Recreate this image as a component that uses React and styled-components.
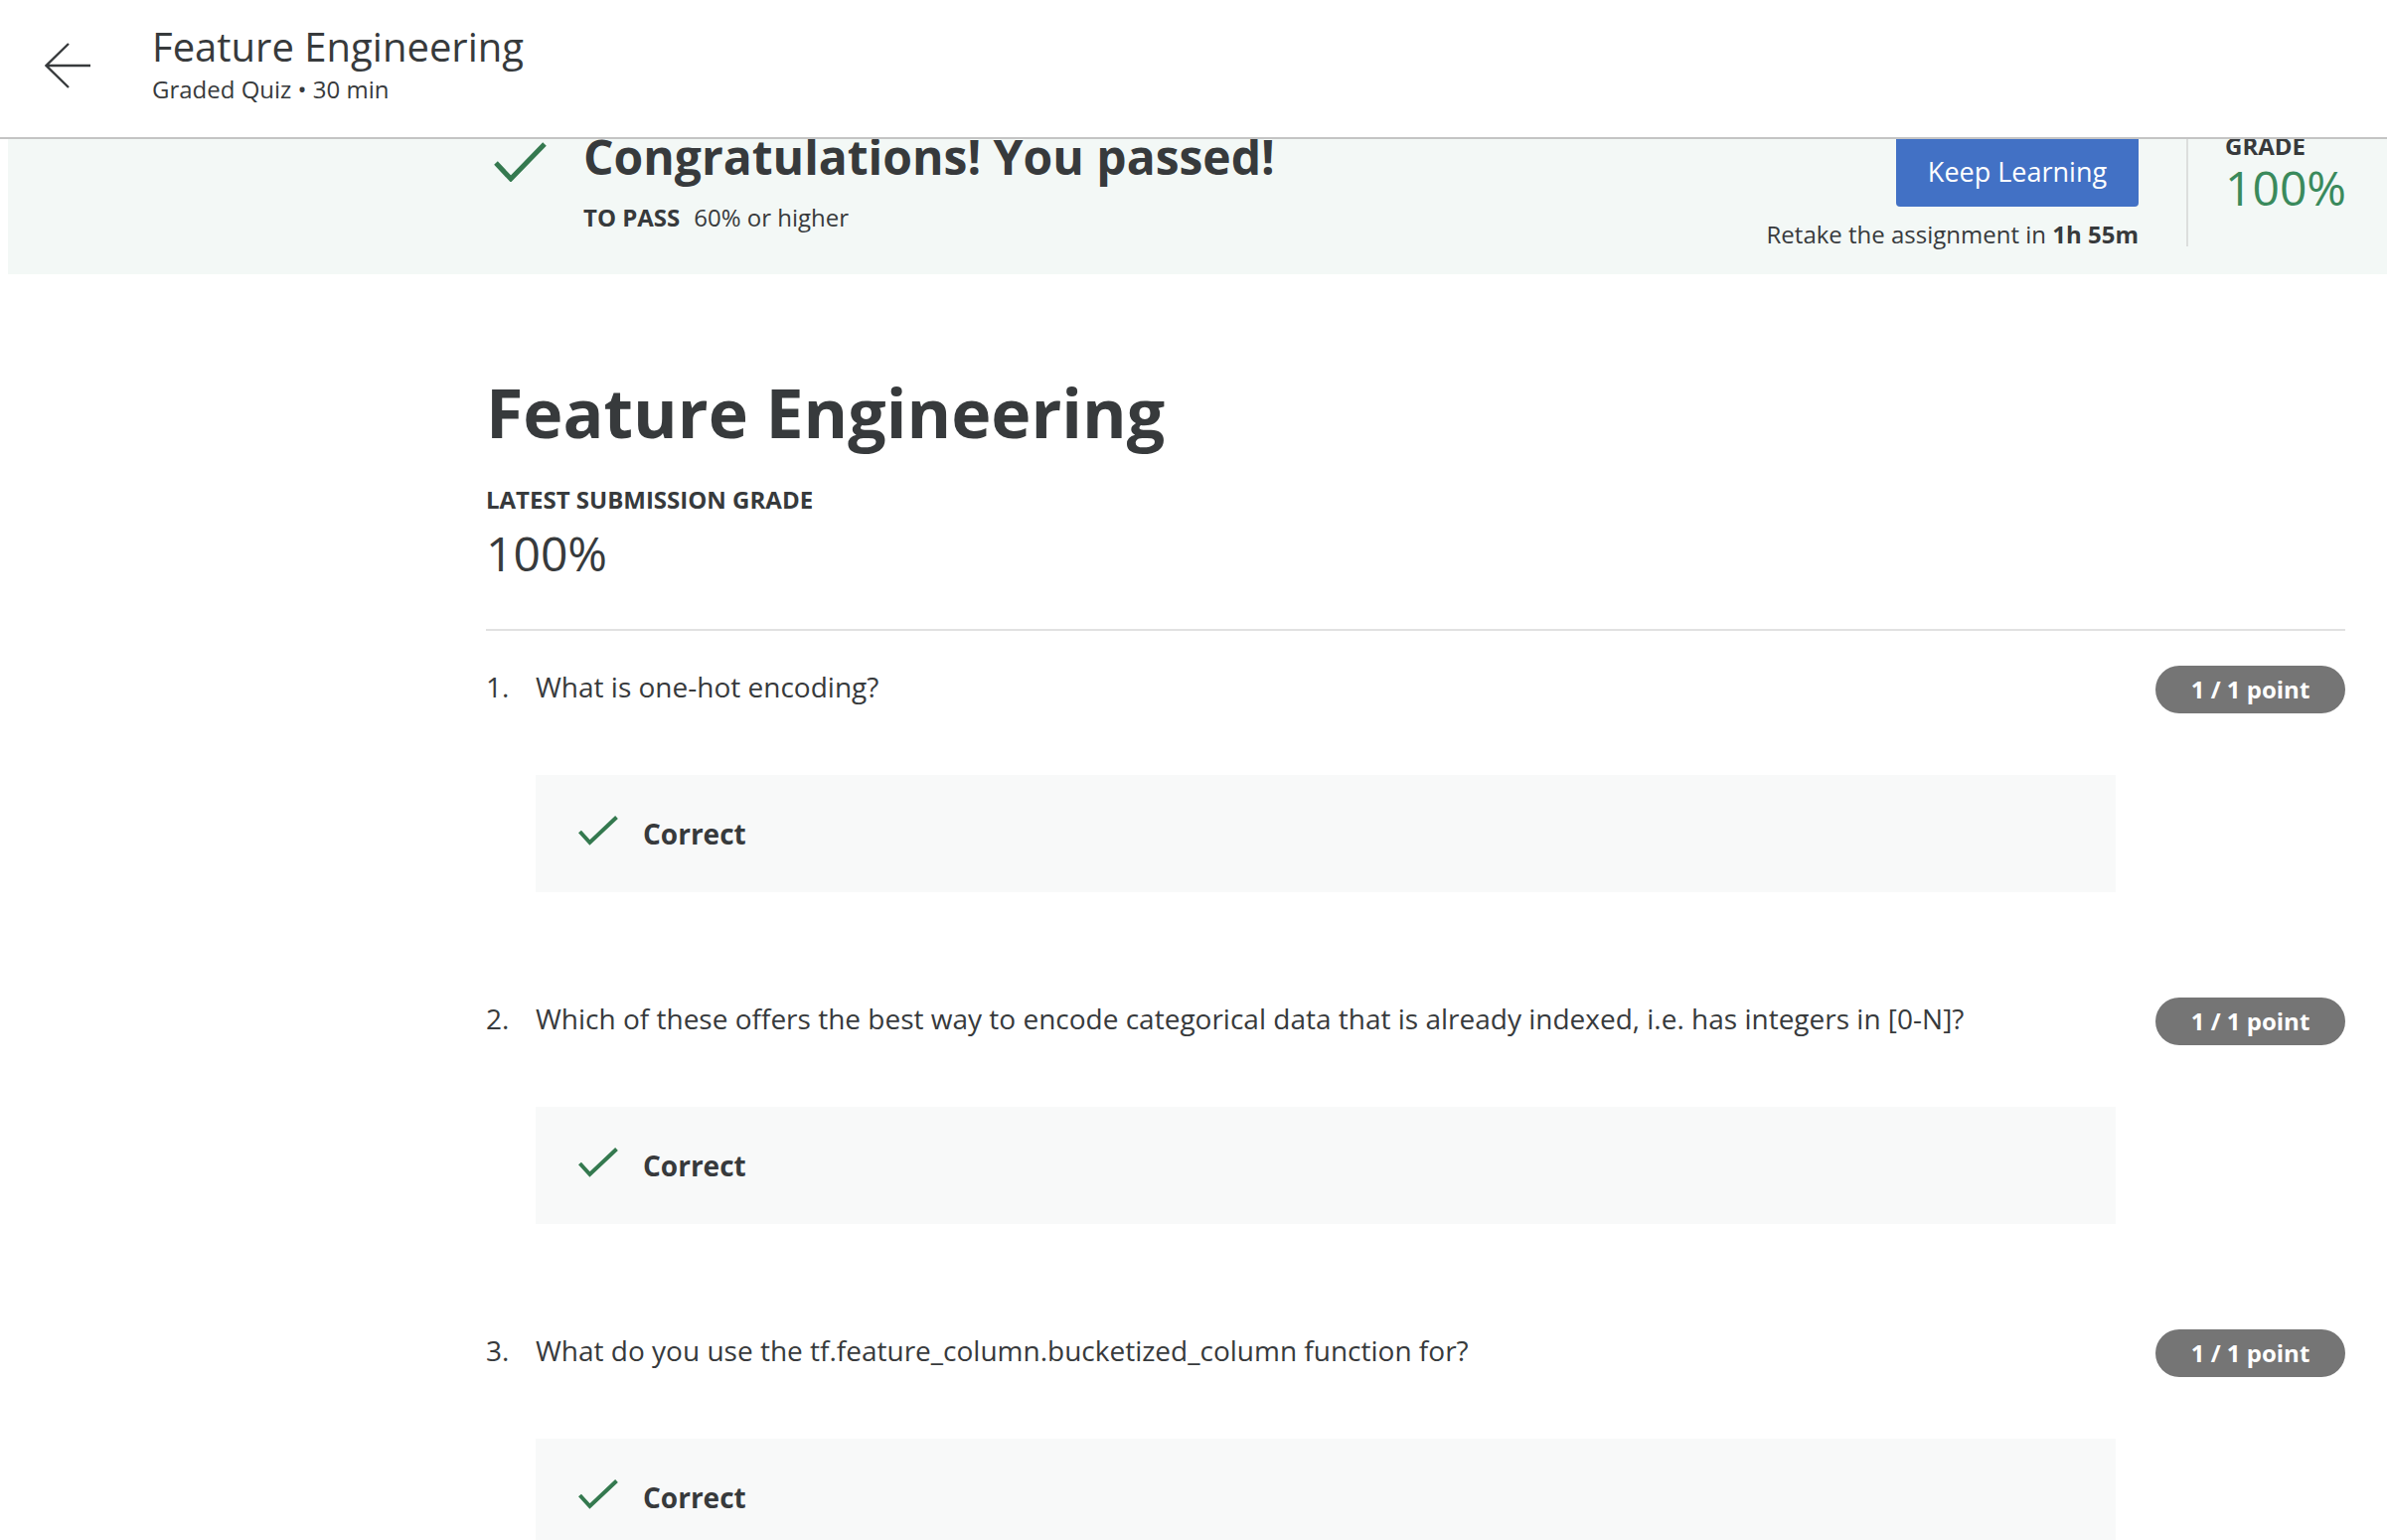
import React from "react";
import styled, { createGlobalStyle } from "styled-components";

const GlobalStyle = createGlobalStyle`
  html, body {
    margin: 0;
    padding: 0;
    overflow: hidden;
    background: #ffffff;
  }
  body {
    font-family: "Open Sans", "Noto Sans", "Liberation Sans", sans-serif;
    color: #373a3c;
  }
  * { box-sizing: border-box; }
`;

const Page = styled.div`
  width: 100%;
  min-height: 1550px;
  background: #ffffff;
`;

/* ---------- Header ---------- */
const Header = styled.header`
  height: 140px;
  border-bottom: 2px solid #c4c4c4;
  display: flex;
  align-items: flex-start;
  padding: 21px 0 0 45px;
  background: #ffffff;
`;

const BackButton = styled.button`
  border: 0;
  background: none;
  padding: 0;
  margin-top: 22px;
  width: 47px;
  height: 46px;
  display: flex;
  color: #373a3c;
  cursor: pointer;
`;

const TitleBlock = styled.div`
  margin-left: 61px;
  display: flex;
  flex-direction: column;
`;

const HeaderTitle = styled.h1`
  margin: 0;
  font-size: 40px;
  line-height: 52px;
  font-weight: 400;
  color: #373a3c;
`;

const HeaderSub = styled.div`
  margin-top: 1px;
  font-size: 24px;
  line-height: 32px;
  color: #373a3c;
`;

/* ---------- Banner ---------- */
const Banner = styled.section`
  margin-left: 8px;
  height: 136px;
  background: #f3f8f6;
  overflow: hidden;
`;

const BannerRow = styled.div`
  display: flex;
  align-items: flex-start;
  margin-top: -8px;
  padding: 0 42px 0 489px;
`;

const BannerCheck = styled.svg`
  flex-shrink: 0;
  margin-top: 11px;
  width: 54px;
  height: 40px;
`;

const BannerText = styled.div`
  margin-left: 36px;
  padding-top: 4px;
  display: flex;
  flex-direction: column;
`;

const Headline = styled.h2`
  margin: 0;
  font-size: 48px;
  line-height: 44px;
  font-weight: 700;
  color: #373a3c;
  white-space: nowrap;
`;

const PassLine = styled.div`
  margin-top: 23px;
  font-size: 24px;
  line-height: 32px;
  color: #373a3c;
`;

const PassLabel = styled.strong`
  font-weight: 700;
  margin-right: 14px;
`;

const ActionCol = styled.div`
  margin-left: auto;
  display: flex;
  flex-direction: column;
  align-items: flex-end;
`;

const KeepButton = styled.button`
  margin-top: 4px;
  width: 244px;
  height: 72px;
  border: 0;
  border-radius: 4px;
  background: #4271c5;
  color: #ffffff;
  font-family: inherit;
  font-size: 27px;
  font-weight: 400;
  cursor: pointer;
`;

const Retake = styled.div`
  margin-top: 12px;
  font-size: 24px;
  line-height: 32px;
  color: #373a3c;
  white-space: nowrap;

  strong { font-weight: 700; }
`;

const GradeCol = styled.div`
  margin-left: 48px;
  width: 160px;
  height: 116px;
  border-left: 2px solid #dcdedd;
  padding: 1px 0 0 37px;
  display: flex;
  flex-direction: column;
`;

const GradeLabel = styled.div`
  font-size: 24px;
  line-height: 28px;
  font-weight: 700;
  color: #373a3c;
`;

const GradeValue = styled.div`
  font-size: 48px;
  line-height: 56px;
  color: #3a8a5c;
`;

/* ---------- Main ---------- */
const Main = styled.main`
  padding: 0 42px 0 489px;
  display: flex;
  flex-direction: column;
`;

const PageTitle = styled.h1`
  margin: 99px 0 0;
  font-size: 68px;
  line-height: 80px;
  font-weight: 700;
  color: #373a3c;
`;

const SectionLabel = styled.div`
  margin-top: 34px;
  font-size: 24px;
  line-height: 28px;
  font-weight: 700;
  color: #373a3c;
`;

const Score = styled.div`
  margin-top: 12px;
  font-size: 48px;
  line-height: 56px;
  color: #373a3c;
`;

const Divider = styled.hr`
  margin: 48px 0 0;
  border: 0;
  height: 2px;
  background: #e1e1e1;
`;

const QuestionList = styled.ol`
  list-style: none;
  margin: 0;
  padding: 35px 0 0;
  display: flex;
  flex-direction: column;
  gap: 106px;
`;

const QuestionItem = styled.li`
  display: flex;
  align-items: flex-start;
`;

const QNumber = styled.div`
  width: 50px;
  flex-shrink: 0;
  padding-top: 3px;
  font-size: 28px;
  line-height: 36px;
  color: #373a3c;
`;

const QBody = styled.div`
  flex: 1;
  min-width: 0;
  display: flex;
  flex-direction: column;
`;

const QText = styled.div`
  padding-top: 3px;
  height: 48px;
  font-size: 28px;
  line-height: 36px;
  color: #373a3c;
  white-space: nowrap;
`;

const FeedbackBox = styled.div`
  margin-top: 62px;
  height: 118px;
  background: #f8f9f9;
  display: flex;
  align-items: center;
  padding-left: 43px;
`;

const FeedbackCheck = styled.svg`
  width: 40px;
  height: 30px;
  margin-top: -6px;
  margin-right: 25px;
  flex-shrink: 0;
`;

const FeedbackText = styled.div`
  font-size: 28px;
  line-height: 36px;
  font-weight: 700;
  color: #373a3c;
`;

const PointsPill = styled.div`
  margin-left: 40px;
  flex-shrink: 0;
  width: 191px;
  height: 48px;
  border-radius: 24px;
  background: #757575;
  color: #ffffff;
  font-size: 24px;
  line-height: 48px;
  font-weight: 700;
  text-align: center;
`;

const BackArrow = () => (
  <svg width="47" height="46" viewBox="0 0 47 46" fill="none">
    <path
      d="M1.5 23 H46 M24 1 L1.5 23 L24 45"
      stroke="currentColor"
      strokeWidth="2.4"
      strokeLinejoin="miter"
    />
  </svg>
);

const questions = [
  "What is one-hot encoding?",
  "Which of these offers the best way to encode categorical data that is already indexed, i.e. has integers in [0-N]?",
  "What do you use the tf.feature_column.bucketized_column function for?",
];

export default function App() {
  return (
    <Page>
      <GlobalStyle />
      <Header>
        <BackButton aria-label="Back">
          <BackArrow />
        </BackButton>
        <TitleBlock>
          <HeaderTitle>Feature Engineering</HeaderTitle>
          <HeaderSub>Graded Quiz • 30 min</HeaderSub>
        </TitleBlock>
      </Header>

      <Banner>
        <BannerRow>
          <BannerCheck viewBox="0 0 54 40" fill="none">
            <polyline
              points="2,21 17,37 51,2"
              stroke="#34794f"
              strokeWidth="5"
              fill="none"
            />
          </BannerCheck>
          <BannerText>
            <Headline>Congratulations! You passed!</Headline>
            <PassLine>
              <PassLabel>TO PASS</PassLabel>60% or higher
            </PassLine>
          </BannerText>
          <ActionCol>
            <KeepButton>Keep Learning</KeepButton>
            <Retake>
              Retake the assignment in <strong>1h 55m</strong>
            </Retake>
          </ActionCol>
          <GradeCol>
            <GradeLabel>GRADE</GradeLabel>
            <GradeValue>100%</GradeValue>
          </GradeCol>
        </BannerRow>
      </Banner>

      <Main>
        <PageTitle>Feature Engineering</PageTitle>
        <SectionLabel>LATEST SUBMISSION GRADE</SectionLabel>
        <Score>100%</Score>
        <Divider />
        <QuestionList>
          {questions.map((q, i) => (
            <QuestionItem key={i}>
              <QNumber>{i + 1}.</QNumber>
              <QBody>
                <QText>{q}</QText>
                <FeedbackBox>
                  <FeedbackCheck viewBox="0 0 40 30" fill="none">
                    <polyline
                      points="1.5,16 11.5,27 38.5,1.5"
                      stroke="#34794f"
                      strokeWidth="4"
                      fill="none"
                    />
                  </FeedbackCheck>
                  <FeedbackText>Correct</FeedbackText>
                </FeedbackBox>
              </QBody>
              <PointsPill>1 / 1 point</PointsPill>
            </QuestionItem>
          ))}
        </QuestionList>
      </Main>
    </Page>
  );
}
